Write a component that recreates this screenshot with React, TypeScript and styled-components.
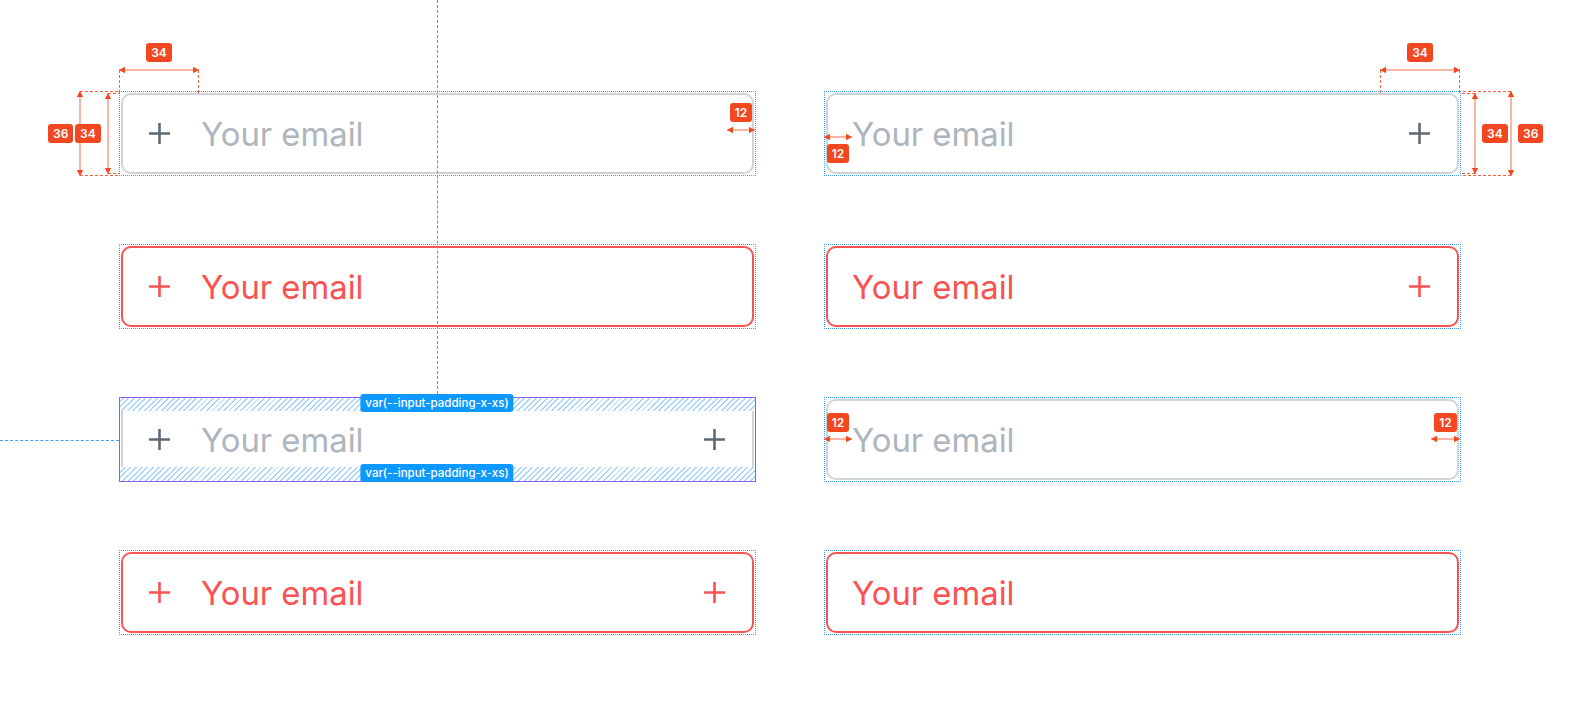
import React from "react"
import styled, { createGlobalStyle, css } from "styled-components"

const GlobalStyle = createGlobalStyle`
    html, body {
        margin: 0;
        padding: 0;
        background: #ffffff;
        font-family: Inter, "Noto Sans", sans-serif;
    }
`

const ACCENT = "#f24822"
const GUIDE = "#3d9ef2"
const GRAY_BORDER = "#ced4da"
const RED = "#fa5252"

const Page = styled.div`
    position: relative;
    width: 1584px;
    height: 703px;
    overflow: hidden;
`

const Grid = styled.div`
    display: grid;
    grid-template-columns: 637px 637px;
    grid-auto-rows: 85px;
    column-gap: 68px;
    row-gap: 68px;
    padding: 91px 0 0 119px;
`

// the selection box drawn by the inspector round each input
const Frame = styled.div<{ $focus?: boolean }>`
    position: relative;
    box-sizing: border-box;
    padding: 2px;
    &::after {
        content: "";
        position: absolute;
        inset: 0;
        z-index: 2;
        pointer-events: none;
        ${(p) =>
            p.$focus
                ? css`border: 1px solid #8a5cf6;`
                : css`border: 1px dotted ${GUIDE};`}
    }
`

const Field = styled.div<{ $error?: boolean }>`
    box-sizing: border-box;
    height: 100%;
    display: flex;
    align-items: center;
    background: #fff;
    border: 2px solid ${(p) => (p.$error ? RED : GRAY_BORDER)};
    border-radius: 10px;
`

const Section = styled.div<{ $error?: boolean; $side: "left" | "right" }>`
    flex: 0 0 78px;
    box-sizing: border-box;
    display: flex;
    align-items: center;
    justify-content: center;
    padding: ${(p) => (p.$side === "left" ? "0 5px 0 0" : "0 0 0 2px")};
    color: ${(p) => (p.$error ? RED : "#5f6973")};
`

const TextInput = styled.input<{ $error?: boolean; $padLeft: boolean }>`
    flex: 1;
    min-width: 0;
    border: none;
    outline: none;
    background: transparent;
    padding: 0 0 0 ${(p) => (p.$padLeft ? "24px" : "0")};
    font-family: Inter, sans-serif;
    font-size: 32.8px;
    color: ${(p) => (p.$error ? RED : "#212529")};
    &::placeholder {
        color: ${(p) => (p.$error ? RED : "#adb5bd")};
        opacity: 1;
    }
`

const Hatch = styled.div<{ $top?: boolean }>`
    position: absolute;
    left: 0;
    right: 0;
    z-index: 1;
    ${(p) => (p.$top ? "top: 0; height: 14px;" : "bottom: 0; height: 15px;")}
    background: repeating-linear-gradient(
        -45deg,
        #a8d5fa 0 1.3px,
        rgba(255, 255, 255, 0.9) 1.3px 4px
    );
`

const Badge = styled.div`
    height: 19px;
    padding: 0 5px;
    box-sizing: border-box;
    display: flex;
    align-items: center;
    justify-content: center;
    background: ${ACCENT};
    color: #fff;
    font-family: Inter, sans-serif;
    font-size: 12px;
    font-weight: 600;
    border-radius: 3px;
    white-space: nowrap;
`

// one dimension annotation: badge + arrow, laid out together and dropped on the canvas
const Dim = styled.div<{ $x: number; $y: number; $w?: number; $vertical?: boolean; $gap: number }>`
    position: absolute;
    z-index: 3;
    left: ${(p) => p.$x}px;
    top: ${(p) => p.$y}px;
    ${(p) => p.$w && `width: ${p.$w}px;`}
    display: flex;
    flex-direction: ${(p) => (p.$vertical ? "row" : "column")};
    align-items: center;
    gap: ${(p) => p.$gap}px;
    svg {
        overflow: visible;
        flex: none;
    }
`

const TokenTag = styled.div<{ $top?: boolean }>`
    position: absolute;
    z-index: 3;
    left: 318px;
    ${(p) => (p.$top ? "top: -3px;" : "top: 67px;")}
    transform: translateX(-50%);
    height: 18px;
    padding: 0 5px;
    display: flex;
    align-items: center;
    background: #0d99ff;
    color: #fff;
    font-family: Inter, sans-serif;
    font-size: 11.5px;
    font-weight: 500;
    border-radius: 3px;
    white-space: nowrap;
`

const GuideV = styled.div`
    position: absolute;
    left: 318px;
    top: -397px;
    height: 394px;
    border-left: 1px dashed ${GUIDE};
`

const GuideH = styled.div`
    position: absolute;
    left: -119px;
    top: 43px;
    width: 119px;
    border-top: 1px dashed ${GUIDE};
`

function Plus() {
    return (
        <svg width="23" height="23" viewBox="0 0 23 23">
            <path d="M11.5 1v21M1 11.5h21" stroke="currentColor" strokeWidth="2.6" />
        </svg>
    )
}

// horizontal arrow; ticks = length of dashed extension lines dropping from both ends
function HArrow({ len, ticks = 0 }: { len: number; ticks?: number }) {
    return (
        <svg width={len} height={10}>
            {ticks > 0 && (
                <g stroke={ACCENT} strokeDasharray="3 2" opacity={0.85}>
                    <line x1={0.5} y1={5} x2={0.5} y2={5 + ticks} />
                    <line x1={len - 0.5} y1={5} x2={len - 0.5} y2={5 + ticks} />
                </g>
            )}
            <line x1={0} y1={5} x2={len} y2={5} stroke={ACCENT} opacity={0.8} />
            <polygon points="0,5 6,1.8 6,8.2" fill={ACCENT} />
            <polygon points={`${len},5 ${len - 6},1.8 ${len - 6},8.2`} fill={ACCENT} />
        </svg>
    )
}

// vertical arrow; ticks > 0 run right from the ends, < 0 run left
function VArrow({ len, ticks = 0 }: { len: number; ticks?: number }) {
    return (
        <svg width={10} height={len}>
            {ticks !== 0 && (
                <g stroke={ACCENT} strokeDasharray="3 2" opacity={0.85}>
                    <line x1={5} y1={0.5} x2={5 + ticks} y2={0.5} />
                    <line x1={5} y1={len - 0.5} x2={5 + ticks} y2={len - 0.5} />
                </g>
            )}
            <line x1={5} y1={0} x2={5} y2={len} stroke={ACCENT} opacity={0.8} />
            <polygon points="5,0 1.8,6 8.2,6" fill={ACCENT} />
            <polygon points={`5,${len} 1.8,${len - 6} 8.2,${len - 6}`} fill={ACCENT} />
        </svg>
    )
}

type InputProps = {
    error?: boolean
    left?: boolean
    right?: boolean
}

function EmailInput({ error, left, right }: InputProps) {
    return (
        <Field $error={error}>
            {left && (
                <Section $side="left" $error={error}>
                    <Plus />
                </Section>
            )}
            <TextInput readOnly placeholder="Your email" $error={error} $padLeft={!left} />
            {right && (
                <Section $side="right" $error={error}>
                    <Plus />
                </Section>
            )}
        </Field>
    )
}

export default function App() {
    return (
        <Page>
            <GlobalStyle />
            <Grid>
                {/* row 1 */}
                <Frame>
                    <EmailInput left />
                    <Dim $x={0} $y={-48} $w={80} $gap={3}>
                        <Badge>34</Badge>
                        <HArrow len={80} ticks={23} />
                    </Dim>
                    <Dim $x={-71} $y={0} $vertical $gap={2}>
                        <Badge>36</Badge>
                        <VArrow len={85} ticks={39} />
                    </Dim>
                    <Dim $x={-44} $y={2} $vertical $gap={2}>
                        <Badge>34</Badge>
                        <VArrow len={81} ticks={12} />
                    </Dim>
                    <Dim $x={608} $y={12} $w={28} $gap={3}>
                        <Badge>12</Badge>
                        <HArrow len={28} />
                    </Dim>
                </Frame>
                <Frame>
                    <EmailInput right />
                    <Dim $x={0} $y={41} $w={28} $gap={2}>
                        <HArrow len={28} />
                        <Badge>12</Badge>
                    </Dim>
                    <Dim $x={556} $y={-48} $w={80} $gap={3}>
                        <Badge>34</Badge>
                        <HArrow len={80} ticks={23} />
                    </Dim>
                    <Dim $x={646} $y={2} $vertical $gap={2}>
                        <VArrow len={81} ticks={-14} />
                        <Badge>34</Badge>
                    </Dim>
                    <Dim $x={682} $y={0} $vertical $gap={2}>
                        <VArrow len={85} ticks={-50} />
                        <Badge>36</Badge>
                    </Dim>
                </Frame>

                {/* row 2 */}
                <Frame>
                    <EmailInput left error />
                </Frame>
                <Frame>
                    <EmailInput right error />
                </Frame>

                {/* row 3 */}
                <Frame $focus>
                    <EmailInput left right />
                    <Hatch $top />
                    <Hatch />
                    <GuideV />
                    <GuideH />
                    <TokenTag $top>var(--input-padding-x-xs)</TokenTag>
                    <TokenTag>var(--input-padding-x-xs)</TokenTag>
                </Frame>
                <Frame>
                    <EmailInput />
                    <Dim $x={0} $y={16} $w={28} $gap={2}>
                        <Badge>12</Badge>
                        <HArrow len={28} />
                    </Dim>
                    <Dim $x={607} $y={16} $w={29} $gap={2}>
                        <Badge>12</Badge>
                        <HArrow len={29} />
                    </Dim>
                </Frame>

                {/* row 4 */}
                <Frame>
                    <EmailInput left right error />
                </Frame>
                <Frame>
                    <EmailInput error />
                </Frame>
            </Grid>
        </Page>
    )
}
